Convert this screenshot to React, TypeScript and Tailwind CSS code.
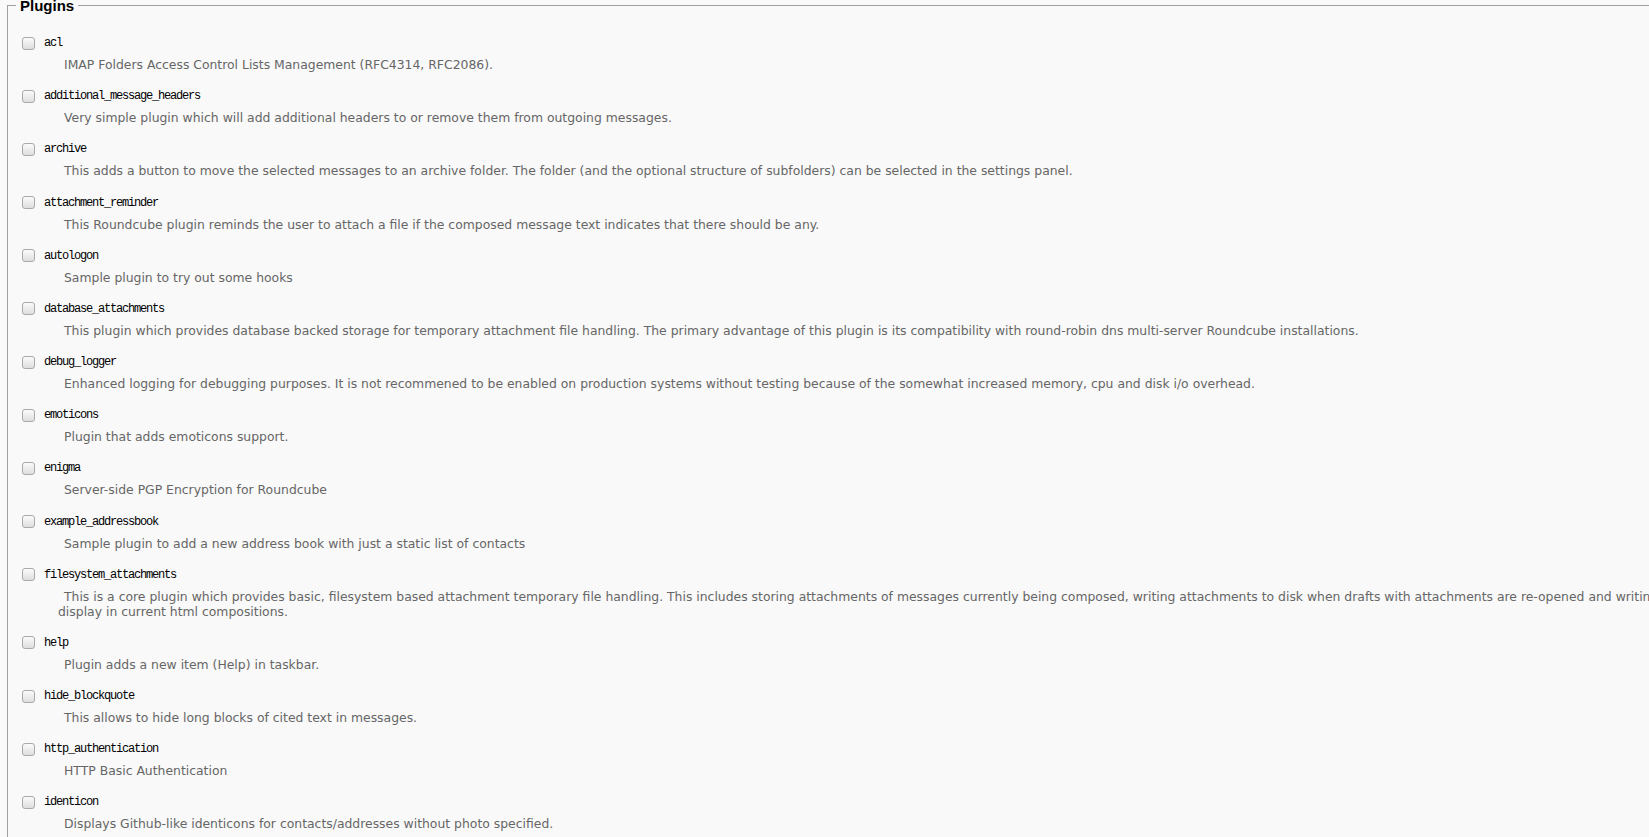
import React from "react";

type Plugin = { name: string; desc: React.ReactNode };

const PLUGINS: Plugin[] = [
  { name: "acl", desc: "IMAP Folders Access Control Lists Management (RFC4314, RFC2086)." },
  { name: "additional_message_headers", desc: "Very simple plugin which will add additional headers to or remove them from outgoing messages." },
  { name: "archive", desc: "This adds a button to move the selected messages to an archive folder. The folder (and the optional structure of subfolders) can be selected in the settings panel." },
  { name: "attachment_reminder", desc: "This Roundcube plugin reminds the user to attach a file if the composed message text indicates that there should be any." },
  { name: "autologon", desc: "Sample plugin to try out some hooks" },
  { name: "database_attachments", desc: "This plugin which provides database backed storage for temporary attachment file handling. The primary advantage of this plugin is its compatibility with round-robin dns multi-server Roundcube installations." },
  { name: "debug_logger", desc: "Enhanced logging for debugging purposes. It is not recommened to be enabled on production systems without testing because of the somewhat increased memory, cpu and disk i/o overhead." },
  { name: "emoticons", desc: "Plugin that adds emoticons support." },
  { name: "enigma", desc: "Server-side PGP Encryption for Roundcube" },
  { name: "example_addressbook", desc: "Sample plugin to add a new address book with just a static list of contacts" },
  {
    name: "filesystem_attachments",
    desc: (
      <>
        This is a core plugin which provides basic, filesystem based attachment temporary file handling. This includes storing attachments of messages currently being composed, writing attachments to disk when drafts with attachments are re-opened and writing inline images to disk to
        <br />
        display in current html compositions.
      </>
    ),
  },
  { name: "help", desc: "Plugin adds a new item (Help) in taskbar." },
  { name: "hide_blockquote", desc: "This allows to hide long blocks of cited text in messages." },
  { name: "http_authentication", desc: "HTTP Basic Authentication" },
  { name: "identicon", desc: "Displays Github-like identicons for contacts/addresses without photo specified." },
];

function Checkbox() {
  return (
    <span className="block w-[13px] h-[13px] shrink-0 rounded-[3px] border border-[#a9a9a9] bg-linear-to-b from-[#fbfbfb] to-[#dedede]" />
  );
}

export default function App() {
  return (
    <div className="w-screen h-[837px] overflow-hidden bg-[#f9f9f9]">
      <fieldset className="ml-[7px] mt-[-2px] w-[2000px] border border-[#a0a0a0] pb-4">
        <legend className="ml-[8px] px-[4px] text-[15px] leading-[14px] font-bold text-black [font-family:'Liberation_Sans',Arial,sans-serif]">
          <span className="relative top-[1px]">Plugins</span>
        </legend>
        <div className="pt-[20px]">
          {PLUGINS.map((p) => (
            <div key={p.name} className="pb-[13.18px]">
              <label className="flex items-center h-[22px] pl-[14px]">
                <Checkbox />
                <span className="ml-[9px] text-[12px] tracking-[-1.2px] text-black [font-family:'Liberation_Mono',monospace]">
                  {p.name}
                </span>
              </label>
              <div className="mt-[3px] pl-[50px] indent-[6px] whitespace-nowrap text-[12.4px] leading-[15px] text-[#666] [font-family:'DejaVu_Sans',Verdana,sans-serif]">
                {p.desc}
              </div>
            </div>
          ))}
        </div>
      </fieldset>
    </div>
  );
}
